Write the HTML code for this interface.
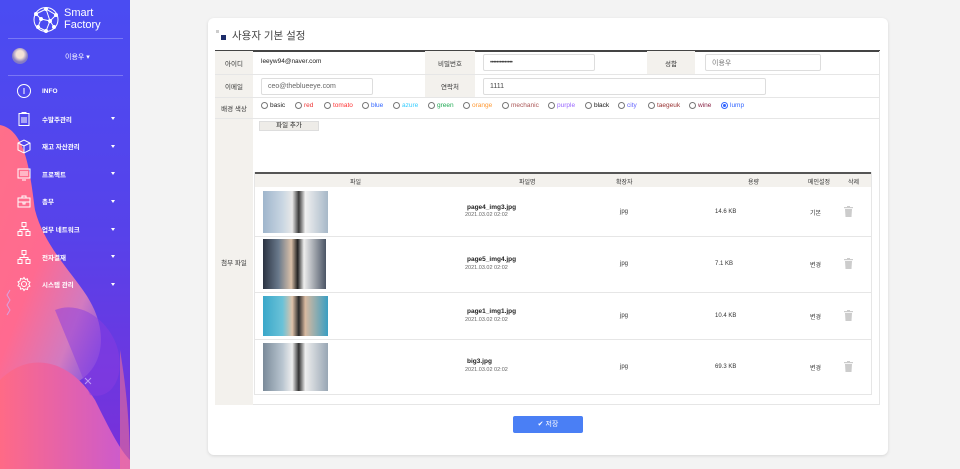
<!DOCTYPE html>
<html><head><meta charset="utf-8"><style>
*{box-sizing:border-box;margin:0;padding:0}
body{width:960px;height:469px;overflow:hidden;background:#f3f3f3;font-family:"Liberation Sans","Noto Sans CJK KR",sans-serif;position:relative;font-size:7px;color:#222}
.a{position:absolute}
#side{left:0;top:0;width:130px;height:469px;overflow:hidden;background:linear-gradient(180deg,#4a4cf2 0%,#5742ea 50%,#7b2fd8 100%)}
.menu{left:16px;color:#fff;font-size:6.5px;font-weight:bold;display:flex;align-items:center}
.menu svg{width:16px;height:16px;margin-right:10px}
.car{left:111px;width:0;height:0;border-left:2.5px solid transparent;border-right:2.5px solid transparent;border-top:3px solid #fff}
#card{left:208px;top:18px;width:680px;height:437px;background:#fff;border-radius:6px;box-shadow:0 1px 3px rgba(0,0,0,.12)}
.lab{background:#f3f1ed;color:#333;font-size:6.5px;display:flex;align-items:center;justify-content:center}
.inp{border:1px solid #ddd;border-radius:2px;background:#fff;font-size:7px;display:flex;align-items:center;padding-left:6px;color:#444}
.hl{height:1px;background:#e6e6e6}
.rad{top:102px;font-size:6.5px;display:flex;align-items:center}
.rad i{display:inline-block;width:7px;height:7px;border:1px solid #777;border-radius:50%;margin-right:2px;background:#fff}
.th{top:172px;height:15px;background:#f3f1ed;border-top:2px solid #555}
.c{text-align:center;font-size:6px;color:#333}
.img{left:263px;width:65px}
</style></head><body>
<div id="side" class="a">
<svg class="a" style="left:0;top:0" width="130" height="469">
<defs>
<linearGradient id="g1" x1="0" y1="0" x2="1" y2="1"><stop offset="0" stop-color="#ff6f8a"/><stop offset=".45" stop-color="#ff6a90"/><stop offset=".75" stop-color="#d27ac0"/><stop offset="1" stop-color="#6d49ea"/></linearGradient>
<linearGradient id="g2" x1="0" y1="0" x2="1" y2="0"><stop offset="0" stop-color="#ff6a86"/><stop offset="1" stop-color="#c95ad0"/></linearGradient>
</defs>
<path d="M0 125 C25 130 30 170 35 210 C45 250 80 280 92 305 C110 340 100 375 70 385 C40 392 10 380 0 380 Z" fill="url(#g1)"/>
<path d="M0 380 C30 350 70 360 95 400 C110 430 120 450 130 460 L130 469 L0 469 Z" fill="url(#g2)"/>
<path d="M55 310 C80 300 110 320 118 350 C125 380 110 400 90 395" fill="#8a3be0" opacity=".5"/>
<path d="M120 350 C125 380 130 420 130 469 L120 469 Z" fill="#ff7a8a" opacity=".5"/>
<path d="M10 290 l-3 5 3 5 -3 5 3 5 -3 5" stroke="#c9b8ff" fill="none" opacity=".7"/>
<path d="M85 378 l6 6 M91 378 l-6 6" stroke="#d9c8ff" opacity=".7"/>
</svg>
<svg class="a" style="left:32px;top:6px" width="28" height="27" viewBox="0 0 28 27" fill="none" stroke="#fff" stroke-width="1"><circle cx="14" cy="13.5" r="12"/><path d="M4 8 L14 3 L24 9 L18 15 L9 13 Z M9 13 L6 21 L14 25 L18 15 L22 21 M14 3 L18 15 M4 8 L9 13"/><g fill="#fff"><circle cx="14" cy="3" r="1.5"/><circle cx="24" cy="9" r="1.5"/><circle cx="4" cy="8" r="1.5"/><circle cx="9" cy="13" r="1.5"/><circle cx="18" cy="15" r="1.5"/><circle cx="6" cy="21" r="1.5"/><circle cx="14" cy="25" r="1.5"/><circle cx="22" cy="21" r="1.5"/></g></svg>
<div class="a" style="left:64px;top:7px;color:#fff;font-size:11px;line-height:12px">Smart<br>Factory</div>
<div class="a" style="left:8px;top:38px;width:115px;height:1px;background:rgba(255,255,255,.25)"></div>
<div class="a" style="left:12px;top:48px;width:16px;height:16px;border-radius:50%;background:radial-gradient(circle at 50% 40%,#f3e2d6 0 30%,#8a7fbf 60%,#6a6ad8)"></div>
<div class="a" style="left:65px;top:52px;color:#fff;font-size:7px">이용우 ▾</div>
<div class="a" style="left:8px;top:75px;width:115px;height:1px;background:rgba(255,255,255,.25)"></div>
<div class="a menu" style="top:83px"><svg viewBox="0 0 16 16" fill="none" stroke="#fff"><circle cx="8" cy="8" r="6.5"/><path d="M8 5v6"/></svg>INFO</div>
<div class="a menu" style="top:111px"><svg viewBox="0 0 16 16" fill="none" stroke="#fff"><rect x="3" y="2.5" width="10" height="12"/><path d="M6 2.5v-1h4v1M5 7h6M5 9h6M5 11h6"/></svg>수발주관리</div>
<div class="a menu" style="top:138px"><svg viewBox="0 0 16 16" fill="none" stroke="#fff"><path d="M2 5l6-3 6 3v7l-6 3-6-3z M2 5l6 3 6-3 M8 8v7"/></svg>재고 자산관리</div>
<div class="a menu" style="top:166px"><svg viewBox="0 0 16 16" fill="none" stroke="#fff"><rect x="2" y="3" width="12" height="9"/><path d="M5 5v5M7 5v5M9 5v5M11 5v5M6 14h4"/></svg>프로젝트</div>
<div class="a menu" style="top:193px"><svg viewBox="0 0 16 16" fill="none" stroke="#fff"><rect x="2" y="5" width="12" height="9"/><path d="M6 5V3h4v2M2 9h12M7 9v2h2V9"/></svg>총무</div>
<div class="a menu" style="top:221px"><svg viewBox="0 0 16 16" fill="none" stroke="#fff"><rect x="6" y="1.5" width="4" height="4"/><rect x="2" y="10.5" width="4" height="4"/><rect x="10" y="10.5" width="4" height="4"/><path d="M8 5.5v3M4 10.5v-2h8v2"/></svg>업무 네트워크</div>
<div class="a menu" style="top:249px"><svg viewBox="0 0 16 16" fill="none" stroke="#fff"><rect x="6" y="1.5" width="4" height="4"/><rect x="2" y="10.5" width="4" height="4"/><rect x="10" y="10.5" width="4" height="4"/><path d="M8 5.5v3M4 10.5v-2h8v2"/></svg>전자결재</div>
<div class="a menu" style="top:276px"><svg viewBox="0 0 16 16" fill="none" stroke="#fff"><circle cx="8" cy="8" r="2.5"/><path d="M8 1.5l1.2 2 2.3-.6.3 2.3 2.2 1-1.2 2 1.2 2-2.2 1-.3 2.3-2.3-.6L8 14.5l-1.2-2-2.3.6-.3-2.3-2.2-1 1.2-2-1.2-2 2.2-1 .3-2.3 2.3.6z"/></svg>시스템 관리</div>
<div class="a car" style="top:117px"></div><div class="a car" style="top:145px"></div><div class="a car" style="top:172px"></div><div class="a car" style="top:200px"></div><div class="a car" style="top:228px"></div><div class="a car" style="top:255px"></div><div class="a car" style="top:283px"></div>
</div>

<div id="card" class="a"></div>
<div class="a" style="left:216px;top:30px;width:3px;height:3px;background:#ccc"></div>
<div class="a" style="left:221px;top:35px;width:5px;height:5px;background:#1d2d6a"></div>
<div class="a" style="left:232px;top:28px;font-size:10.5px;color:#444">사용자 기본 설정</div>
<div class="a" style="left:215px;top:50px;width:665px;height:1.5px;background:#444"></div>
<div class="a" style="left:215px;top:51px;width:665px;height:354px;border:1px solid #e6e6e6;border-top:none"></div>
<div class="a lab" style="left:215px;top:51px;width:38px;height:23px">아이디</div>
<div class="a lab" style="left:215px;top:74px;width:38px;height:23px">이메일</div>
<div class="a lab" style="left:215px;top:97px;width:38px;height:21px">배경 색상</div>
<div class="a lab" style="left:215px;top:118px;width:38px;height:287px">첨부 파일</div>
<div class="a lab" style="left:425px;top:51px;width:50px;height:23px">비밀번호</div>
<div class="a lab" style="left:425px;top:74px;width:50px;height:23px">연락처</div>
<div class="a lab" style="left:647px;top:51px;width:48px;height:23px">성함</div>
<div class="a hl" style="left:215px;top:74px;width:665px"></div>
<div class="a hl" style="left:215px;top:97px;width:665px"></div>
<div class="a hl" style="left:215px;top:118px;width:665px"></div>
<div class="a" style="left:261px;top:58px;font-size:6.5px">leeyw94@naver.com</div>
<div class="a inp" style="left:483px;top:54px;width:112px;height:17px;font-size:6px;letter-spacing:-.5px">••••••••••••••</div>
<div class="a inp" style="left:705px;top:54px;width:116px;height:17px;color:#777">이용우</div>
<div class="a inp" style="left:261px;top:78px;width:112px;height:17px;color:#666">ceo@theblueeye.com</div>
<div class="a inp" style="left:483px;top:78px;width:283px;height:17px">1111</div>
<div class="a rad" style="left:261px"><i></i>basic</div>
<div class="a rad" style="left:295px;color:#e33"><i></i>red</div>
<div class="a rad" style="left:324px;color:#f33"><i></i>tomato</div>
<div class="a rad" style="left:362px;color:#36f"><i></i>blue</div>
<div class="a rad" style="left:393px;color:#3cf"><i></i>azure</div>
<div class="a rad" style="left:428px;color:#2a5"><i></i>green</div>
<div class="a rad" style="left:463px;color:#f93"><i></i>orange</div>
<div class="a rad" style="left:502px;color:#a55"><i></i>mechanic</div>
<div class="a rad" style="left:548px;color:#96f"><i></i>purple</div>
<div class="a rad" style="left:585px;color:#111"><i></i>black</div>
<div class="a rad" style="left:618px;color:#66f"><i></i>city</div>
<div class="a rad" style="left:648px;color:#933"><i></i>taegeuk</div>
<div class="a rad" style="left:689px;color:#824"><i></i>wine</div>
<div class="a rad" style="left:721px;color:#36f"><i style="background:radial-gradient(#36f 0 40%,#fff 45%);border-color:#36f"></i>lump</div>
<div class="a" style="left:259px;top:121px;width:60px;height:10px;background:#eeece8;border:1px solid #ddd;font-size:6.5px;text-align:center;line-height:8px">파일 추가</div>

<div class="a th" style="left:254px;width:618px"></div>
<div class="a" style="left:254px;top:172px;width:618px;height:223px;border:1px solid #e6e6e6;border-top:none"></div>
<div class="a c" style="left:350px;top:177px">파일</div>
<div class="a c" style="left:519px;top:177px">파일명</div>
<div class="a c" style="left:616px;top:177px">확장자</div>
<div class="a c" style="left:748px;top:177px">용량</div>
<div class="a c" style="left:808px;top:177px">메인설정</div>
<div class="a c" style="left:848px;top:177px">삭제</div>

<div class="a hl" style="left:254px;top:236px;width:618px"></div>
<div class="a hl" style="left:254px;top:292px;width:618px"></div>
<div class="a hl" style="left:254px;top:339px;width:618px"></div>

<div class="a img" style="top:191px;height:42px;background:linear-gradient(90deg,#9fb5cc 0%,#c9d6e2 30%,#e8e8e8 45%,#3a3a3a 55%,#f0f0f0 65%,#a7b8c8 100%)"></div>
<div class="a img" style="top:239px;height:50px;width:63px;background:linear-gradient(90deg,#2b3342 0%,#6a7a8c 25%,#d9c0a8 45%,#222 55%,#eee 65%,#4b5565 100%)"></div>
<div class="a img" style="top:296px;height:40px;background:linear-gradient(90deg,#3aa7c9 0%,#6ac2d8 30%,#e0c3aa 45%,#2a2a2a 55%,#d8b9a0 65%,#3a9ec2 100%)"></div>
<div class="a img" style="top:343px;height:48px;background:linear-gradient(90deg,#7a8a99 0%,#b9c5d0 30%,#eee 45%,#333 55%,#eee 65%,#98a6b4 100%)"></div>

<div class="a" style="left:467px;top:204px;font-size:6.5px;font-weight:bold">page4_img3.jpg</div>
<div class="a" style="left:465px;top:212px;font-size:5.5px;color:#666">2021.03.02 02:02</div>
<div class="a" style="left:467px;top:256px;font-size:6.5px;font-weight:bold">page5_img4.jpg</div>
<div class="a" style="left:465px;top:265px;font-size:5.5px;color:#666">2021.03.02 02:02</div>
<div class="a" style="left:467px;top:308px;font-size:6.5px;font-weight:bold">page1_img1.jpg</div>
<div class="a" style="left:465px;top:317px;font-size:5.5px;color:#666">2021.03.02 02:02</div>
<div class="a" style="left:467px;top:358px;font-size:6.5px;font-weight:bold">big3.jpg</div>
<div class="a" style="left:465px;top:367px;font-size:5.5px;color:#666">2021.03.02 02:02</div>

<div class="a c" style="left:620px;top:209px">jpg</div><div class="a c" style="left:620px;top:261px">jpg</div><div class="a c" style="left:620px;top:313px">jpg</div><div class="a c" style="left:620px;top:364px">jpg</div>
<div class="a c" style="left:715px;top:209px">14.6 KB</div><div class="a c" style="left:715px;top:261px">7.1 KB</div><div class="a c" style="left:715px;top:313px">10.4 KB</div><div class="a c" style="left:715px;top:364px">69.3 KB</div>
<div class="a c" style="left:810px;top:208px">기본</div><div class="a c" style="left:810px;top:260px">변경</div><div class="a c" style="left:810px;top:312px">변경</div><div class="a c" style="left:810px;top:363px">변경</div>
<svg class="a" style="left:844px;top:206px" width="9" height="11" viewBox="0 0 9 11" fill="#ccc"><rect x="0" y="1" width="9" height="1.2"/><rect x="3" y="0" width="3" height="1"/><path d="M1 3h7l-.5 8h-6z"/></svg>
<svg class="a" style="left:844px;top:258px" width="9" height="11" viewBox="0 0 9 11" fill="#ccc"><rect x="0" y="1" width="9" height="1.2"/><rect x="3" y="0" width="3" height="1"/><path d="M1 3h7l-.5 8h-6z"/></svg>
<svg class="a" style="left:844px;top:310px" width="9" height="11" viewBox="0 0 9 11" fill="#ccc"><rect x="0" y="1" width="9" height="1.2"/><rect x="3" y="0" width="3" height="1"/><path d="M1 3h7l-.5 8h-6z"/></svg>
<svg class="a" style="left:844px;top:361px" width="9" height="11" viewBox="0 0 9 11" fill="#ccc"><rect x="0" y="1" width="9" height="1.2"/><rect x="3" y="0" width="3" height="1"/><path d="M1 3h7l-.5 8h-6z"/></svg>

<div class="a" style="left:513px;top:416px;width:70px;height:17px;background:#4a7ff5;border-radius:2px;color:#fff;font-size:7px;text-align:center;line-height:17px">✔ 저장</div>
</body></html>
